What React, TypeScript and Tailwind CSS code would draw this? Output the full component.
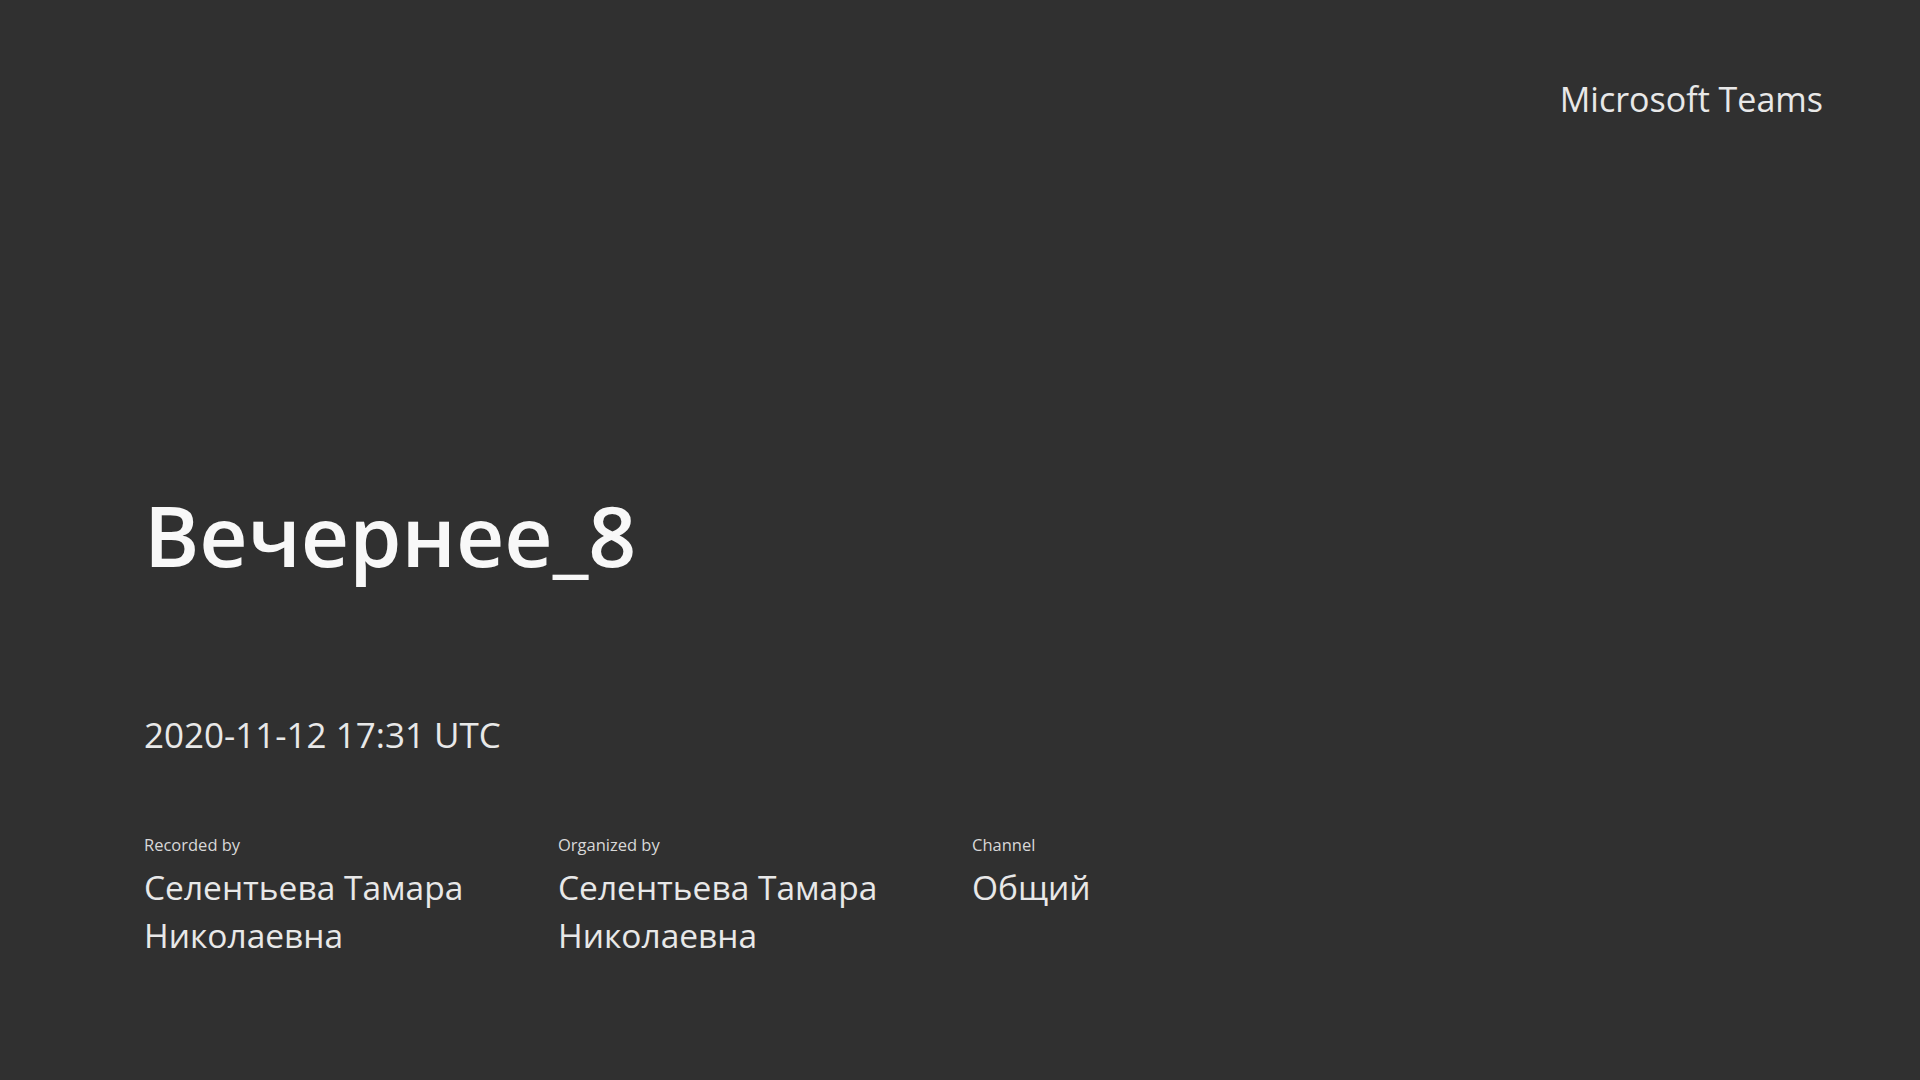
import React from 'react';

const people = [
  { label: 'Recorded by', value: 'Селентьева Тамара Николаевна' },
  { label: 'Organized by', value: 'Селентьева Тамара Николаевна' },
  { label: 'Channel', value: 'Общий' },
];

const App: React.FC = () => {
  return (
    <div className="h-screen w-full overflow-hidden bg-[#303030] text-white font-['Open_Sans','Noto_Sans',sans-serif] flex flex-col pl-[144px] pr-[97px]">
      <div className="self-end pt-[76px] text-[34px] leading-[46px] text-[#e8e8e8]">Microsoft Teams</div>

      <h1 className="mt-[353px] text-[84px] leading-[120px] font-semibold text-[#f8f8f8]">Вечернее_8</h1>

      <div className="mt-[117px] text-[35px] leading-[46px] text-[#e8e8e8]">2020-11-12 17:31 UTC</div>

      <div className="mt-[76px] grid grid-cols-[414px_414px_414px]">
        {people.map((p) => (
          <div key={p.label} className="flex flex-col">
            <span className="text-[16.5px] leading-[22px] text-[#d8d8d8]">{p.label}</span>
            <span className="mt-[7px] w-[340px] text-[33.5px] leading-[48px] text-[#e8e8e8]">{p.value}</span>
          </div>
        ))}
      </div>
    </div>
  );
};

export default App;
